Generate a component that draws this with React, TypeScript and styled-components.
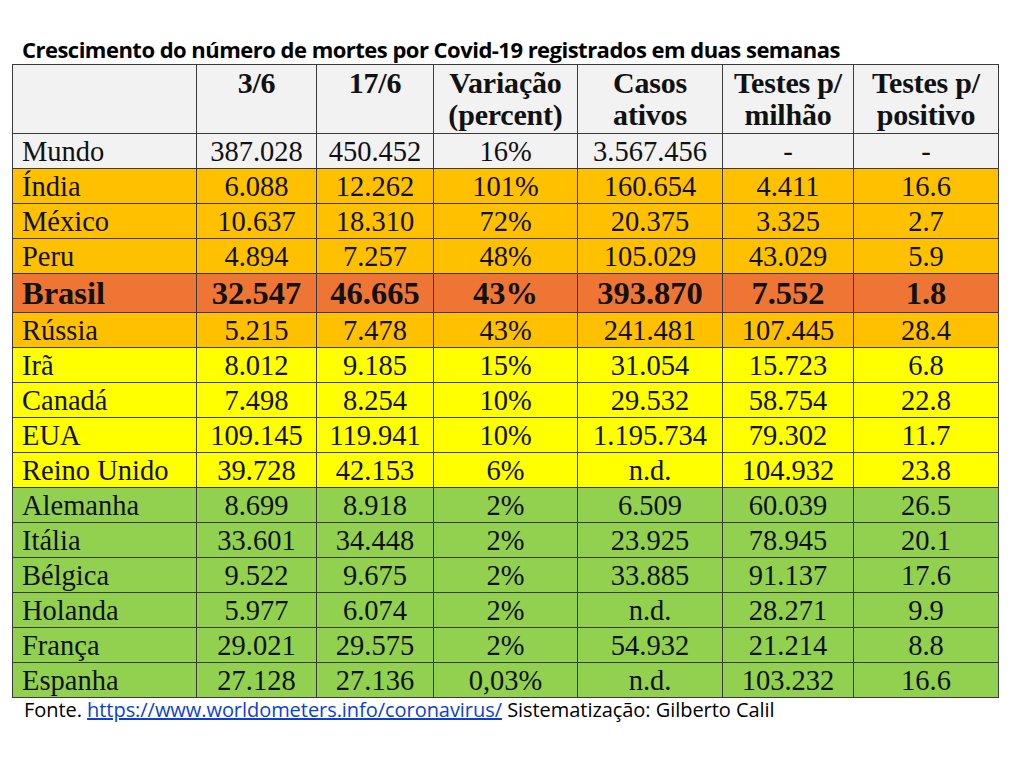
import React from "react";
import styled, { createGlobalStyle } from "styled-components";

const Global = createGlobalStyle`
  html, body { margin: 0; padding: 0; background: #ffffff; }
  body { width: 1024px; height: 759px; overflow: hidden; }
`;

const Page = styled.div`
  padding: 34px 0 0 12px;
  display: flex;
  flex-direction: column;
`;

const Title = styled.h1`
  margin: 0 0 0 10px;
  font-family: "Open Sans", "Noto Sans", sans-serif;
  font-weight: 700;
  font-size: 22px;
  line-height: 30px;
  color: #000;
  letter-spacing: -0.52px;
  white-space: nowrap;
`;

const Table = styled.table`
  border-collapse: collapse;
  table-layout: fixed;
  width: 986px;
  font-family: "Liberation Serif", "Times New Roman", serif;
  color: #111;
`;

const HeadCell = styled.th`
  border: 1px solid #3a3a3a;
  background: #f2f2f2;
  font-weight: 700;
  font-size: 30px;
  line-height: 32px;
  height: 66px;
  padding: 2px 0 0 0;
  vertical-align: top;
  text-align: center;
  letter-spacing: -0.2px;
`;

type Tone = "grey" | "orange" | "red" | "yellow" | "green";

const tones: Record<Tone, string> = {
  grey: "#f2f2f2",
  orange: "#ffc000",
  red: "#ef7534",
  yellow: "#ffff00",
  green: "#92d050",
};

const Cell = styled.td<{ $tone: Tone; $strong?: boolean; $first?: boolean }>`
  border: 1px solid #3a3a3a;
  background: ${(p) => tones[p.$tone]};
  font-size: ${(p) => (p.$strong ? "32.5px" : "28.5px")};
  font-weight: ${(p) => (p.$strong ? 700 : 400)};
  height: ${(p) => (p.$strong ? "38px" : "34px")};
  line-height: ${(p) => (p.$strong ? "37px" : "33px")};
  padding: 0;
  padding-left: ${(p) => (p.$first ? "9px" : "0")};
  text-align: ${(p) => (p.$first ? "left" : "center")};
  vertical-align: middle;
  white-space: nowrap;
`;

const Footer = styled.p`
  margin: 1px 0 0 12px;
  font-family: "Open Sans", "Noto Sans", sans-serif;
  font-size: 20px;
  line-height: 22px;
  color: #000;
  letter-spacing: -0.05px;
  white-space: nowrap;
`;

const Link = styled.a`
  color: #0b3fd6;
  text-decoration: underline;
`;

const widths = [184, 120, 117, 144, 145, 131, 145];

type Row = { tone: Tone; strong?: boolean; cells: string[] };

const rows: Row[] = [
  { tone: "grey", cells: ["Mundo", "387.028", "450.452", "16%", "3.567.456", "-", "-"] },
  { tone: "orange", cells: ["Índia", "6.088", "12.262", "101%", "160.654", "4.411", "16.6"] },
  { tone: "orange", cells: ["México", "10.637", "18.310", "72%", "20.375", "3.325", "2.7"] },
  { tone: "orange", cells: ["Peru", "4.894", "7.257", "48%", "105.029", "43.029", "5.9"] },
  { tone: "red", strong: true, cells: ["Brasil", "32.547", "46.665", "43%", "393.870", "7.552", "1.8"] },
  { tone: "orange", cells: ["Rússia", "5.215", "7.478", "43%", "241.481", "107.445", "28.4"] },
  { tone: "yellow", cells: ["Irã", "8.012", "9.185", "15%", "31.054", "15.723", "6.8"] },
  { tone: "yellow", cells: ["Canadá", "7.498", "8.254", "10%", "29.532", "58.754", "22.8"] },
  { tone: "yellow", cells: ["EUA", "109.145", "119.941", "10%", "1.195.734", "79.302", "11.7"] },
  { tone: "yellow", cells: ["Reino Unido", "39.728", "42.153", "6%", "n.d.", "104.932", "23.8"] },
  { tone: "green", cells: ["Alemanha", "8.699", "8.918", "2%", "6.509", "60.039", "26.5"] },
  { tone: "green", cells: ["Itália", "33.601", "34.448", "2%", "23.925", "78.945", "20.1"] },
  { tone: "green", cells: ["Bélgica", "9.522", "9.675", "2%", "33.885", "91.137", "17.6"] },
  { tone: "green", cells: ["Holanda", "5.977", "6.074", "2%", "n.d.", "28.271", "9.9"] },
  { tone: "green", cells: ["França", "29.021", "29.575", "2%", "54.932", "21.214", "8.8"] },
  { tone: "green", cells: ["Espanha", "27.128", "27.136", "0,03%", "n.d.", "103.232", "16.6"] },
];

const headers: [string, string][] = [
  ["", ""],
  ["3/6", ""],
  ["17/6", ""],
  ["Variação", "(percent)"],
  ["Casos", "ativos"],
  ["Testes p/", "milhão"],
  ["Testes p/", "positivo"],
];

export default function App() {
  return (
    <>
      <Global />
      <Page>
        <Title>Crescimento do número de mortes por Covid-19 registrados em duas semanas</Title>
        <Table>
          <colgroup>
            {widths.map((w, i) => (
              <col key={i} style={{ width: w }} />
            ))}
          </colgroup>
          <thead>
            <tr>
              {headers.map(([a, b], i) => (
                <HeadCell key={i}>
                  {a}
                  {b && <br />}
                  {b}
                </HeadCell>
              ))}
            </tr>
          </thead>
          <tbody>
            {rows.map((r) => (
              <tr key={r.cells[0]}>
                {r.cells.map((c, i) => (
                  <Cell key={i} $tone={r.tone} $strong={r.strong} $first={i === 0}>
                    {c}
                  </Cell>
                ))}
              </tr>
            ))}
          </tbody>
        </Table>
        <Footer>
          Fonte. <Link href="#">https://www.worldometers.info/coronavirus/</Link> Sistematização: Gilberto Calil
        </Footer>
      </Page>
    </>
  );
}
